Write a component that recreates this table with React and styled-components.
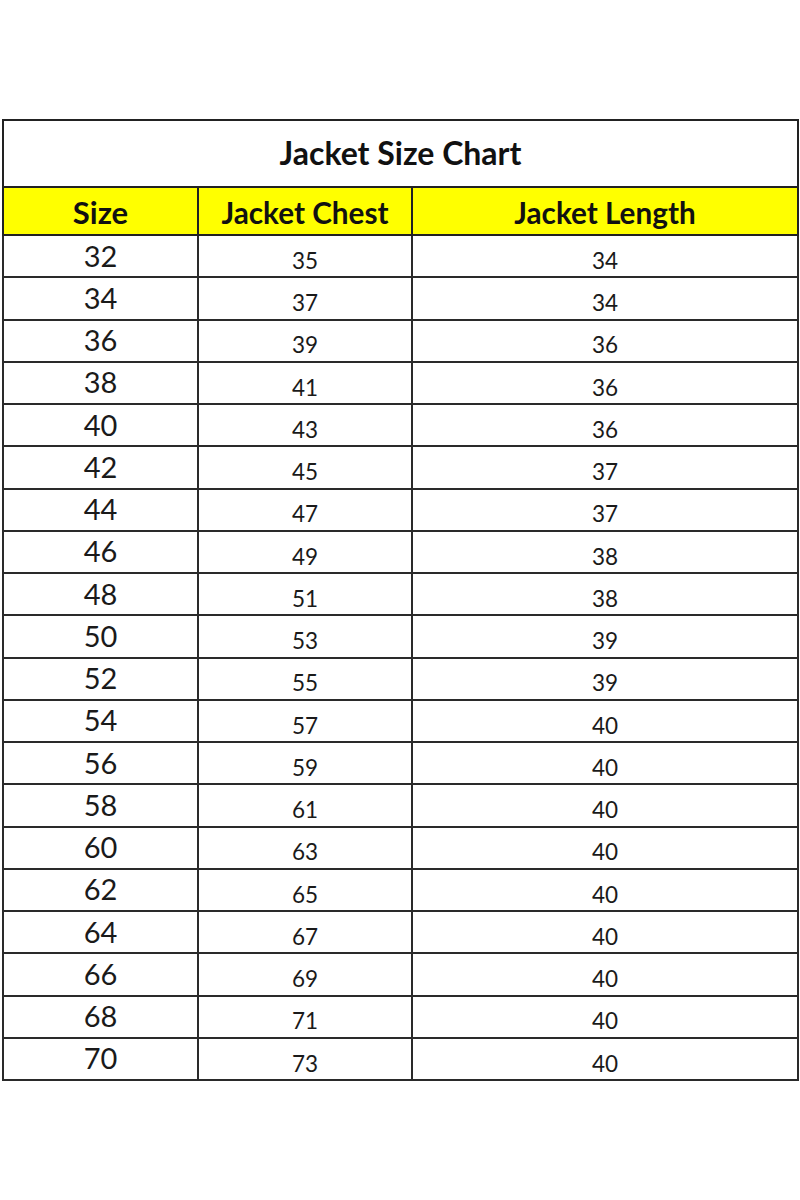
import React from 'react';
import styled, { createGlobalStyle } from 'styled-components';

const GlobalStyle = createGlobalStyle`
  body {
    margin: 0;
    background: #fff;
    font-family: Lato, "Open Sans", sans-serif;
    color: #111;
  }
`;

const rows = [
  [32, 35, 34], [34, 37, 34], [36, 39, 36], [38, 41, 36], [40, 43, 36],
  [42, 45, 37], [44, 47, 37], [46, 49, 38], [48, 51, 38], [50, 53, 39],
  [52, 55, 39], [54, 57, 40], [56, 59, 40], [58, 61, 40], [60, 63, 40],
  [62, 65, 40], [64, 67, 40], [66, 69, 40], [68, 71, 40], [70, 73, 40],
];

const Page = styled.div`
  padding: 119px 1px 0 2px;
`;

const Table = styled.table`
  width: 797px;
  border-collapse: collapse;
  table-layout: fixed;
  border: 2px solid #222;
`;

const TitleCell = styled.th`
  height: 63px;
  font-size: 32px;
  font-weight: 700;
  text-align: center;
  padding: 0 0 2px;
  border-bottom: 2px solid #222;
`;

const HeadCell = styled.th`
  height: 44px;
  background: #ffff00;
  font-size: ${(p) => (p.$wide ? '31px' : '29.7px')};
  font-weight: 700;
  text-align: center;
  padding: 2px 0 0;
  border: 2px solid #222;
`;

const Cell = styled.td`
  height: ${(p) => (p.$big ? '38.25px' : '30.25px')};
  text-align: center;
  border: 2px solid #2a2a2a;
  padding: ${(p) => (p.$big ? '0 0 2px' : '10px 0 0')};
  font-size: ${(p) => (p.$big ? '29px' : '22.5px')};
  line-height: 1;
  color: #1a1a1a;
`;

const App = () => (
  <>
    <GlobalStyle />
    <Page>
      <Table>
        <colgroup>
          <col style={{ width: '195px' }} />
          <col style={{ width: '214px' }} />
          <col />
        </colgroup>
        <thead>
          <tr>
            <TitleCell colSpan={3}>Jacket Size Chart</TitleCell>
          </tr>
          <tr>
            <HeadCell $wide>Size</HeadCell>
            <HeadCell>Jacket Chest</HeadCell>
            <HeadCell>Jacket Length</HeadCell>
          </tr>
        </thead>
        <tbody>
          {rows.map(([size, chest, length]) => (
            <tr key={size}>
              <Cell $big>{size}</Cell>
              <Cell>{chest}</Cell>
              <Cell>{length}</Cell>
            </tr>
          ))}
        </tbody>
      </Table>
    </Page>
  </>
);

export default App;
